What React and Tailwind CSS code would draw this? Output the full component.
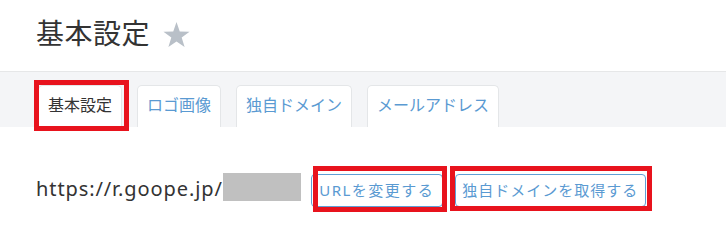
const tabs = ["基本設定", "ロゴ画像", "独自ドメイン", "メールアドレス"];

const RedMark = ({ className }) => (
    <span className={`pointer-events-none absolute border-[5px] border-[#e8131d] ${className}`} />
);

const App = () => {
    return (
        <div
            className="w-[726px] h-[251px] bg-white text-[#333] overflow-hidden"
            style={{ fontFamily: '"Noto Sans", "Noto Sans CJK JP", sans-serif' }}
        >
            {/* header */}
            <div className="h-[71px] px-[36px] pt-[12px] flex items-start gap-[13px]">
                <h1 className="text-[28px] leading-[42px] font-normal tracking-[0.5px]">基本設定</h1>
                <svg width="27" height="26" viewBox="0 0 24 23" className="mt-[10px]">
                    <polygon
                        points="12,0 14.9,8.3 23.6,8.5 16.6,13.8 19.2,22.2 12,17.2 4.8,22.2 7.4,13.8 0.4,8.5 9.1,8.3"
                        fill="#b9c0c8"
                    />
                </svg>
            </div>

            {/* tabs */}
            <div className="h-[56px] border-t border-[#e6e7e8] bg-[#f4f5f7] pl-[38px] pt-[13px] flex items-end gap-[15px]">
                {tabs.map((tab, i) => (
                    <div key={tab} className="relative">
                        <div
                            className={`h-[42px] px-[9px] pt-[7px] bg-white border border-b-0 border-[#e4e6e8] rounded-t-[5px] text-[16px] leading-[24px] ${
                                i === 0 ? "text-[#333]" : "text-[#5a9ad2]"
                            }`}
                        >
                            {tab}
                        </div>
                        {i === 0 && <RedMark className="-left-[4px] -top-[5px] w-[95px] h-[51px]" />}
                    </div>
                ))}
            </div>

            {/* url row */}
            <div className="pt-[47px] pl-[36px] flex items-start">
                <span className="mt-[1px] text-[20px] leading-[28px] tracking-[0.9px]">https://r.goope.jp/</span>
                <span className="w-[78px] h-[28px] bg-[#c0c0c0] -mt-[1px]" />
                <div className="relative ml-[10px]">
                    <button className="w-[132px] h-[33px] border border-[#5f9fd6] rounded-[4px] text-[15px] tracking-[1.5px] text-[#5a9ad2] bg-white flex items-center justify-center">
                        URLを変更する
                    </button>
                    <RedMark className="left-[2px] -top-[8px] w-[134px] h-[46px]" />
                </div>
                <div className="relative ml-[12px]">
                    <button className="w-[191px] h-[33px] border border-[#5f9fd6] rounded-[4px] text-[15px] tracking-[1px] text-[#5a9ad2] bg-white flex items-center justify-center">
                        独自ドメインを取得する
                    </button>
                    <RedMark className="-left-[5px] -top-[8px] w-[202px] h-[45px]" />
                </div>
            </div>
        </div>
    );
};

export default App;
